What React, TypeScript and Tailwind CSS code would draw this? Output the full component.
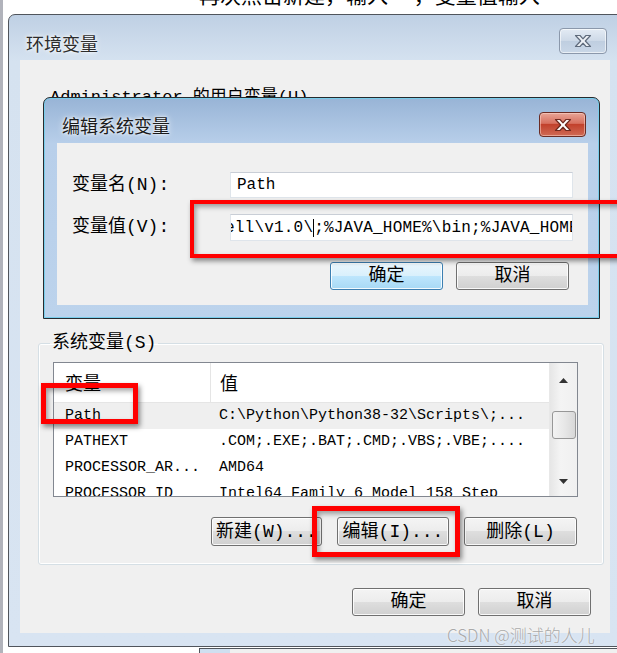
import React from 'react';

const simsun = "font-['Liberation_Mono','Noto_Sans_CJK_SC',monospace]";

const CloseX = ({ fill, stroke }: { fill: string; stroke: string }) => (
  <svg width="20" height="14" viewBox="0 0 20 14">
    <path
      d="M2.5 1.5h4.5l3 3.3 3-3.3h4.5l-5.2 5.5 5.2 5.5h-4.5l-3-3.3-3 3.3H2.5l5.2-5.5z"
      fill={fill}
      stroke={stroke}
      strokeWidth="1.2"
      strokeLinejoin="round"
    />
  </svg>
);

const WinButton = ({
  children,
  focused = false,
  className = '',
}: {
  children: React.ReactNode;
  focused?: boolean;
  className?: string;
}) => (
  <div
    className={`flex items-center justify-center rounded-[3px] border text-[18px] leading-none text-black shadow-[inset_0_0_0_1px_rgba(255,255,255,0.85)] ${simsun} ${
      focused
        ? 'border-[#3c7fb1] bg-[linear-gradient(to_bottom,#eaf6fd_0%,#d9f0fc_50%,#bee6fd_50%,#a7d9f5_100%)]'
        : 'border-[#707070] bg-[linear-gradient(to_bottom,#f4f4f4_0%,#ececec_50%,#dedede_50%,#d0d0d0_100%)]'
    } ${className}`}
  >
    {children}
  </div>
);

const rows = [
  { name: 'Path', value: 'C:\\Python\\Python38-32\\Scripts\\;...', selected: true },
  { name: 'PATHEXT', value: '.COM;.EXE;.BAT;.CMD;.VBS;.VBE;....' },
  { name: 'PROCESSOR_AR...', value: 'AMD64' },
  { name: 'PROCESSOR_ID', value: 'Intel64 Family 6 Model 158 Step' },
];

export default function App() {
  return (
    <div className="relative h-[653px] w-[617px] overflow-hidden bg-white font-['Noto_Sans_CJK_SC',sans-serif]">
      {/* desktop edge on the left */}
      <div className="absolute left-0 top-0 h-full w-[3px] bg-[#b1b3bb]" />

      {/* document text behind the window, cut by it */}
      <div className="h-[14px] overflow-hidden pl-[199px]">
        <div className="-mt-[20px] whitespace-nowrap text-[21px] leading-[28px] text-black">
          再次点击新建，输入　 ，变量值输入
        </div>
      </div>

      {/* 环境变量 window */}
      <div className="ml-[8px] flex h-[633px] w-[616px] flex-col rounded-t-[7px] border border-[#50555c] bg-[linear-gradient(to_bottom,#bfd0e4,#d5e2f0_46px,#d8e4f2)] pl-[11px] pr-[13px]">
        <div className="flex h-[45px] items-start justify-between">
          <div className="pl-[6px] pt-[17px] text-[18px] leading-[22px] text-[#2c2c2c] [text-shadow:0_0_6px_#ffffff,0_0_3px_#ffffff]">
            环境变量
          </div>
          <div className="mr-[3px] mt-[13px] flex h-[26px] w-[48px] items-center justify-center rounded-[4px] border border-[#8b98ab] bg-[linear-gradient(to_bottom,#e3ebf4,#cdd9e7_50%,#bfcee0_50%,#c9d7e7)] shadow-[inset_0_0_0_1px_rgba(255,255,255,0.6)]">
            <CloseX fill="#eef2f7" stroke="#5f6b7c" />
          </div>
        </div>

        <div className="flex h-[573px] flex-col bg-[#f0f0f0] px-[18px]">
          {/* user variables (hidden by the dialog) */}
          <div className="h-[272px] pt-[27px]">
            <div className={`pl-[12px] text-[17px] leading-[22px] text-black ${simsun}`}>
              Administrator 的用户变量(U)
            </div>
          </div>

          {/* 系统变量 */}
          <fieldset className="w-[565px] rounded-[3px] border border-[#d5dfe5] pb-[18px] pl-[14px] pr-[25px] pt-[8px] shadow-[inset_0_0_0_1px_#ffffff]">
            <legend className={`-ml-[3px] px-[2px] text-[18px] leading-[22px] text-black ${simsun}`}>系统变量(S)</legend>
            <div className="flex h-[135px] w-[525px] overflow-hidden border border-[#828790] bg-white">
              <div className="flex flex-1 flex-col">
                <div className="flex h-[40px] shrink-0 border-b border-[#e5e5e5] text-[18px] text-black">
                  <div className="flex w-[157px] items-center border-r border-[#e5e5e5] pl-[11px]">变量</div>
                  <div className="flex items-center pl-[9px]">值</div>
                </div>
                {rows.map((r) => (
                  <div
                    key={r.name}
                    className={`flex h-[26px] shrink-0 items-center whitespace-nowrap text-[15px] text-black ${simsun} ${
                      r.selected ? 'bg-[#efefef]' : ''
                    }`}
                  >
                    <div className="w-[157px] pl-[11px]">{r.name}</div>
                    <div className="pl-[8px]">{r.value}</div>
                  </div>
                ))}
              </div>
              {/* scrollbar */}
              <div className="flex w-[28px] flex-col items-center border-l border-[#e8e8e8] bg-[linear-gradient(to_right,#e6e6e6,#f4f4f4_40%,#f0f0f0)]">
                <div className="flex h-[34px] items-center justify-center">
                  <svg width="9" height="5" viewBox="0 0 9 5"><path d="M0 5L4.5 0 9 5z" fill="#333" /></svg>
                </div>
                <div className="mt-[14px] h-[28px] w-[24px] rounded-[3px] border border-[#979797] bg-[linear-gradient(to_right,#f3f3f3,#e8e8e8_50%,#d8d8d8)]" />
                <div className="flex flex-1 items-end pb-[12px]">
                  <svg width="9" height="5" viewBox="0 0 9 5"><path d="M0 0L4.5 5 9 0z" fill="#333" /></svg>
                </div>
              </div>
            </div>
            <div className="mt-[20px] flex justify-end gap-[15px] pr-[1px]">
              <WinButton className="h-[29px] w-[111px]">新建(W)...</WinButton>
              <WinButton className="h-[29px] w-[112px]">编辑(I)...</WinButton>
              <WinButton className="h-[29px] w-[113px]">删除(L)</WinButton>
            </div>
          </fieldset>

          <div className="mt-[23px] flex justify-end gap-[13px] pr-[1px]">
            <WinButton className="h-[28px] w-[113px]">确定</WinButton>
            <WinButton className="h-[28px] w-[113px]">取消</WinButton>
          </div>
        </div>
      </div>

      {/* window behind, peeking under the bottom */}
      <div className="absolute left-[199px] top-[648px] h-[6px] w-[418px] border-l border-t border-[#50555c] bg-[linear-gradient(to_right,#cfdff0_0px,#cfdff0_30px,#f0f0f0_30px)]" />

      {/* 编辑系统变量 dialog */}
      <div className="absolute left-[43px] top-[97px] flex h-[222px] w-[557px] flex-col rounded-t-[7px] border border-[#262a2e] bg-[linear-gradient(to_bottom,#98b4d6,#b8cfea_46px,#bcd3ec)] pl-[13px] pr-[11px] shadow-[inset_0_0_0_1px_#78cdeb]">
        <div className="flex h-[45px] shrink-0 items-start justify-between">
          <div className="pl-[5px] pt-[16px] text-[18px] leading-[22px] text-[#1a1a1a] [text-shadow:0_0_7px_#ffffff,0_0_3px_#ffffff]">
            编辑系统变量
          </div>
          <div className="mr-[2px] mt-[14px] flex h-[25px] w-[47px] items-center justify-center rounded-[4px] border border-[#6b2c24] bg-[linear-gradient(to_bottom,#e8a597,#d7705f_45%,#c2412c_50%,#cf6a55)] shadow-[inset_0_0_0_1px_rgba(255,220,210,0.5)]">
            <CloseX fill="#ffffff" stroke="#6e2a20" />
          </div>
        </div>
        <div className="flex h-[162px] flex-col bg-[#f0f0f0] pl-[15px] pr-[15px] pt-[29px]">
          <div className="flex h-[26px] items-center">
            <div className={`w-[158px] text-[18px] text-black ${simsun}`}>变量名(N):</div>
            <div className="flex h-[26px] w-[343px] items-center border border-[#dfe5eb] border-t-[#c9ced6] bg-white pl-[6px]">
              <span className={`text-[16px] text-black ${simsun}`}>Path</span>
            </div>
          </div>
          <div className="mt-[16px] flex h-[27px] items-center">
            <div className={`w-[158px] text-[18px] text-black ${simsun}`}>变量值(V):</div>
            <div className="flex h-[27px] w-[343px] items-center overflow-hidden border border-[#dfe5eb] border-t-[#c9ced6] bg-white">
              <span className={`-ml-[6px] whitespace-nowrap text-[16px] tracking-[0.2px] text-black ${simsun}`}>
                ell\v1.0\<span className="border-l border-black" />;%JAVA_HOME%\bin;%JAVA_HOME%
              </span>
            </div>
          </div>
          <div className="mt-[21px] flex justify-end gap-[13px] pr-[4px]">
            <WinButton focused className="h-[28px] w-[113px]">确定</WinButton>
            <WinButton className="h-[28px] w-[113px]">取消</WinButton>
          </div>
        </div>
      </div>

      {/* red annotation boxes */}
      <div className="absolute left-[190px] top-[200px] h-[58px] w-[460px] border-[4px] border-[#ff0000] shadow-[2px_3px_5px_rgba(0,0,0,0.45),inset_2px_3px_5px_rgba(0,0,0,0.35)]" />
      <div className="absolute left-[41px] top-[383px] h-[41px] w-[97px] border-[5px] border-[#ff0000] shadow-[2px_3px_5px_rgba(0,0,0,0.45),inset_2px_3px_5px_rgba(0,0,0,0.35)]" />
      <div className="absolute left-[312px] top-[506px] h-[51px] w-[148px] border-[5px] border-[#ff0000] shadow-[2px_3px_5px_rgba(0,0,0,0.45),inset_2px_3px_5px_rgba(0,0,0,0.35)]" />

      {/* watermark */}
      <div className="absolute left-[447px] top-[624px] whitespace-nowrap text-[17px] font-light leading-[22px] text-[#a9a9a9] [text-shadow:0_0_2px_#ffffff]">
        CSDN @测试的人儿
      </div>
    </div>
  );
}
